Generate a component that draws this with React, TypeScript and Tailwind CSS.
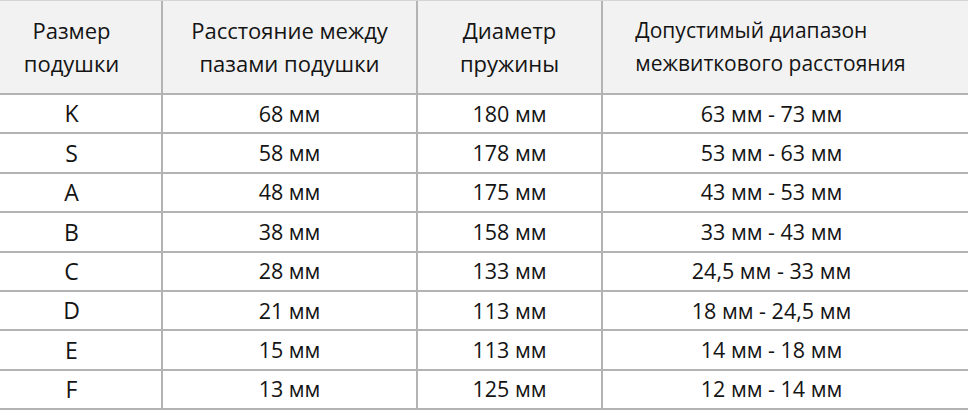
import React from "react";

const rows: [string, string, string, string][] = [
  ["K", "68 мм", "180 мм", "63 мм - 73 мм"],
  ["S", "58 мм", "178 мм", "53 мм - 63 мм"],
  ["A", "48 мм", "175 мм", "43 мм - 53 мм"],
  ["B", "38 мм", "158 мм", "33 мм - 43 мм"],
  ["C", "28 мм", "133 мм", "24,5 мм - 33 мм"],
  ["D", "21 мм", "113 мм", "18 мм - 24,5 мм"],
  ["E", "15 мм", "113 мм", "14 мм - 18 мм"],
  ["F", "13 мм", "125 мм", "12 мм - 14 мм"],
];

export default function App() {
  return (
    <div
      className="w-[970px] h-[410px] bg-white overflow-hidden text-[#141414]"
      style={{ fontFamily: "'Open Sans', 'Noto Sans', sans-serif" }}
    >
      <div className="w-[968px] border-t border-[#d4d4d4]">
        <div className="flex h-[94px] bg-[#f2f2f2] border-b-2 border-[#b3b3b3] text-[22px] leading-[33px]">
          <div className="w-[163px] border-r-2 border-[#b3b3b3] flex items-center justify-center text-center pr-[18px]">
            <div>Размер<br />подушки</div>
          </div>
          <div className="w-[255px] border-r-2 border-[#b3b3b3] flex items-center justify-center text-center">
            <div>Расстояние между<br />пазами подушки</div>
          </div>
          <div className="w-[185px] border-r-2 border-[#b3b3b3] flex items-center justify-center text-center">
            <div>Диаметр<br />пружины</div>
          </div>
          <div className="flex-1 flex items-center justify-center pr-[30px] text-[21px]">
            <div className="text-left">Допустимый диапазон<br />межвиткового расстояния</div>
          </div>
        </div>
        {rows.map((r) => (
          <div key={r[0]} className="flex h-[39.4px] border-b-2 border-[#b3b3b3] text-[21.5px]">
            <div className="w-[163px] border-r-2 border-[#b3b3b3] flex items-center justify-center pr-[18px] text-[23px]">
              {r[0]}
            </div>
            <div className="w-[255px] border-r-2 border-[#b3b3b3] flex items-center justify-center">
              {r[1]}
            </div>
            <div className="w-[185px] border-r-2 border-[#b3b3b3] flex items-center justify-center">
              {r[2]}
            </div>
            <div className="flex-1 flex items-center justify-center pr-[28px]">{r[3]}</div>
          </div>
        ))}
      </div>
    </div>
  );
}
